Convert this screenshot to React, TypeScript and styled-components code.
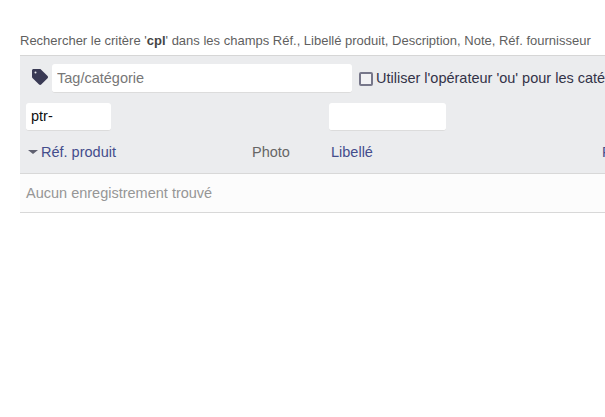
import styled, { createGlobalStyle } from "styled-components";

const GlobalStyle = createGlobalStyle`
  html, body {
    margin: 0;
    padding: 0;
    background: #ffffff;
    overflow: hidden;
  }
  body {
    font-family: "Liberation Sans", Arial, sans-serif;
  }
`;

const TagIcon = () => (
  <svg width="16" height="16" viewBox="0 0 512 512" fill="#3a3a55">
    <path d="M0 252V48C0 21.5 21.5 0 48 0h204c12.7 0 25 5.1 34 14.100l212 212c18.700 18.700 18.700 49.100 0 67.900L294 498c-18.700 18.700-49.100 18.700-67.900 0L14.100 286C5.100 277 0 264.700 0 252zm112-172a32 32 0 1 0 0 64 32 32 0 1 0 0-64z" />
  </svg>
);

export default function App() {
  return (
    <Page>
      <GlobalStyle />
      <SearchInfo>
        Rechercher le critère '<b>cpl</b>' dans les champs Réf., Libellé
        produit, Description, Note, Réf. fournisseur
      </SearchInfo>
      <Panel>
        <TagRow>
          <TagIconBox>
            <TagIcon />
          </TagIconBox>
          <TagInput placeholder="Tag/catégorie" />
          <OrCheckbox type="checkbox" />
          <OrLabel>Utiliser l'opérateur 'ou' pour les catégories</OrLabel>
        </TagRow>
        <FilterRow>
          <RefFilter defaultValue="ptr-" />
          <LabelFilter />
        </FilterRow>
        <HeaderRow>
          <RefColumn>
            <SortArrow />
            <ColumnLink>Réf. produit</ColumnLink>
          </RefColumn>
          <PhotoColumn>Photo</PhotoColumn>
          <LabelColumn>
            <ColumnLink>Libellé</ColumnLink>
          </LabelColumn>
          <ColumnLink>Prix</ColumnLink>
        </HeaderRow>
      </Panel>
      <EmptyRow>Aucun enregistrement trouvé</EmptyRow>
    </Page>
  );
}

const Page = styled.div`
  width: 605px;
  height: 417px;
  overflow: hidden;
  padding: 33px 0 0 20px;
  box-sizing: border-box;
`;

const SearchInfo = styled.div`
  width: 700px;
  height: 22px;
  font-size: 13px;
  line-height: 16px;
  color: #5f5f5f;
  white-space: nowrap;
  b {
    color: #444444;
  }
`;

const Panel = styled.div`
  width: 760px;
  background: #ebecee;
  border-top: 1px solid #d6d6d6;
  border-bottom: 1px solid #d8d8d8;
`;

const TagRow = styled.div`
  display: flex;
  align-items: flex-start;
  height: 47px;
  padding-top: 8px;
  box-sizing: border-box;
`;

const TagIconBox = styled.span`
  display: flex;
  width: 32px;
  justify-content: flex-end;
  padding: 5px 4px 0 0;
  box-sizing: border-box;
`;

const WhiteInput = styled.input`
  box-sizing: border-box;
  border: none;
  border-bottom: 1px solid #dcdcdc;
  border-radius: 3px;
  background: #ffffff;
  outline: none;
  font-family: inherit;
  font-size: 14.5px;
  margin: 0;
`;

const TagInput = styled(WhiteInput)`
  width: 300px;
  height: 29px;
  padding: 0 5px;
  &::placeholder {
    color: #777777;
    opacity: 1;
  }
`;

const OrCheckbox = styled.input`
  appearance: none;
  width: 14px;
  height: 14px;
  margin: 8px 3px 0 7px;
  box-sizing: border-box;
  border: 2px solid #77778a;
  border-radius: 2px;
  background: #f2f2f4;
`;

const OrLabel = styled.label`
  font-size: 14.5px;
  line-height: 29px;
  color: #333348;
  white-space: nowrap;
`;

const FilterRow = styled.div`
  display: flex;
  height: 28px;
  padding-left: 6px;
`;

const RefFilter = styled(WhiteInput)`
  width: 85px;
  height: 28px;
  padding: 0 5px 2px;
  color: #111111;
`;

const LabelFilter = styled(WhiteInput)`
  width: 117px;
  height: 28px;
  margin-left: 218px;
`;

const HeaderRow = styled.div`
  display: flex;
  align-items: center;
  height: 42px;
  font-size: 14.5px;
`;

const RefColumn = styled.div`
  display: flex;
  align-items: center;
  width: 232px;
  padding-left: 8px;
  box-sizing: border-box;
`;

const SortArrow = styled.span`
  width: 0;
  height: 0;
  margin-right: 3px;
  border-left: 5px solid transparent;
  border-right: 5px solid transparent;
  border-top: 4px solid #5f6070;
`;

const ColumnLink = styled.span`
  color: #444d8c;
`;

const PhotoColumn = styled.div`
  width: 79px;
  color: #666666;
`;

const LabelColumn = styled.div`
  width: 271px;
`;

const EmptyRow = styled.div`
  width: 760px;
  height: 39px;
  line-height: 38px;
  padding-left: 6px;
  box-sizing: border-box;
  background: #fcfcfc;
  border-bottom: 1px solid #d8d8d8;
  font-size: 14.5px;
  color: #969696;
`;
